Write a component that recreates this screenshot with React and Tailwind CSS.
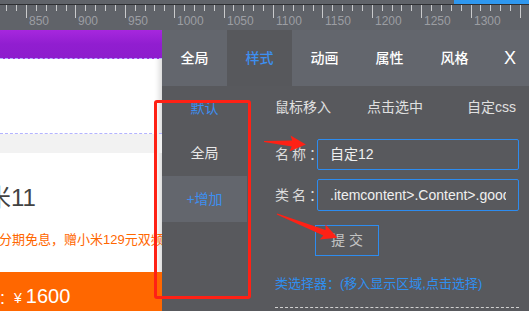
import React from 'react';

const FONT = "font-['Liberation_Sans','Noto_Sans_CJK_SC',sans-serif]";

// ruler along the top: minor tick every ~9.88px, label every 5th tick
const Ruler = () => {
  const ticks = [];
  for (let i = 0; 6.24 + i * 9.88 < 529; i++) {
    const x = Math.round(6.24 + i * 9.88) + 0.5;
    const major = (i - 2) % 5 === 0 && i >= 2;
    ticks.push({ x, major, label: 850 + (i - 2) * 10 });
  }
  return (
    <div className="h-[30px] bg-[#606369] shrink-0">
      <svg width="529" height="30" className="block">
        <rect x="454" y="0" width="75" height="4" fill="#2f98f0" />
        <rect x="0" y="4" width="529" height="1" fill="#2e2f32" />
        {ticks.map((t) => (
          <g key={t.x}>
            <line x1={t.x} x2={t.x} y1="5" y2={t.major ? 18 : 11} stroke="#c9cacc" strokeWidth="1" />
            {t.major && t.x < 500 && (
              <text x={t.x + 2.5} y="25" fontSize="12" fill="#9c9ea3" fontFamily="Liberation Sans, sans-serif">
                {t.label}
              </text>
            )}
          </g>
        ))}
      </svg>
    </div>
  );
};

const LeftPage = () => (
  <div className="w-[162px] shrink-0 flex flex-col bg-white overflow-hidden shadow-[inset_-7px_0_6px_-5px_rgba(0,0,0,0.18)]">
    <div className="h-[29px] bg-linear-to-b from-[#a627de] via-[#911ed0] to-[#8d1dcd] border-b border-dashed border-[#b3b3ff]" />
    <div className="h-[75px] border-b border-dashed border-[#b3b3ff]" />
    <div className="h-[19px] bg-[#f2f2f2]" />
    <div className="h-[119px] whitespace-nowrap">
      <div className="pt-[30px] text-[24px] leading-[30px] text-[#424242] ml-[-37px]">小米11</div>
      <div className="mt-[18px] text-[13px] leading-[18px] text-[#ff6700] ml-[-1px]">分期免息，赠小米129元双频路由器</div>
    </div>
    <div className="h-[39px] bg-[#ff6700] flex items-baseline pt-[12px] text-white whitespace-nowrap">
      <span className="text-[14px] leading-[24px] ml-[-1px]">：</span>
      <span className="text-[14px] leading-[24px] ml-[1px]">¥</span>
      <span className="text-[20px] leading-[24px] ml-[4px]">1600</span>
    </div>
  </div>
);

const tabs = ['全局', '样式', '动画', '属性', '风格'];

const Panel = () => (
  <div className="flex-1 flex flex-col bg-[#58595d] min-w-0">
    <div className="h-[56px] bg-[#63666d] flex">
      {tabs.map((t) => (
        <div
          key={t}
          className={`w-[65px] flex items-center justify-center text-[14px] font-medium ${
            t === '样式' ? 'bg-[#57585c] text-[#3d8ff0]' : 'text-white'
          }`}
        >
          {t}
        </div>
      ))}
      <div className="flex-1 flex items-center justify-center text-[18px] text-white font-light pl-[4px]">X</div>
    </div>
    <div className="flex flex-1">
      <div className="w-[85px] shrink-0 flex flex-col text-[14px]">
        <div className="h-[44px] flex items-center justify-center text-[#3d8ff0]">默认</div>
        <div className="h-[46px] flex items-center justify-center text-[#e8e8e8]">全局</div>
        <div className="h-[46px] flex items-center justify-center text-[#3d8ff0] bg-[#63666d]">+增加</div>
      </div>
      <div className="flex-1 min-w-0 pl-[28px] pr-[10px] flex flex-col text-[14px]">
        <div className="flex pt-[11px] leading-[20px] text-[#e0e0e0] whitespace-nowrap">
          <span>鼠标移入</span>
          <span className="ml-[36px]">点击选中</span>
          <span className="ml-[44px]">自定css</span>
        </div>
        <div className="flex items-center mt-[22px] h-[31px]">
          <span className="w-[42px] shrink-0 whitespace-nowrap tracking-[3px] text-[#dcdcdc]">名称：</span>
          <div className="flex-1 min-w-0 h-full border border-[#2d8cf0] rounded-[2px] pl-[12px] flex items-center text-[#f0f0f0]">
            自定12
          </div>
        </div>
        <div className="flex items-center mt-[9px] h-[32px]">
          <span className="w-[42px] shrink-0 whitespace-nowrap tracking-[3px] text-[#dcdcdc]">类名：</span>
          <div className="flex-1 min-w-0 h-full border border-[#2d8cf0] rounded-[2px] pl-[12px] pr-[12px] flex items-center text-[#f0f0f0]">
            <span className="min-w-0 overflow-hidden whitespace-nowrap">.itemcontent&gt;.Content&gt;.goods</span>
          </div>
        </div>
        <div className="mt-[14px] ml-[40px] w-[64px] h-[31px] border border-[#2d8cf0] flex items-center justify-center text-[#c4c4c4] tracking-[4px] pl-[4px]">
          提交
        </div>
        <div className="mt-[18px] text-[13px] leading-[20px] text-[#2f8ff0] whitespace-nowrap">
          类选择器：(移入显示区域,点击选择)
        </div>
        <div className="mt-[13px] border-t border-dashed border-[#d0d0d0]" />
      </div>
    </div>
  </div>
);

const Arrow = ({ x, y, len, angle }) => (
  <polygon
    transform={`translate(${x} ${y}) rotate(${angle})`}
    points={`0,-0.6 ${len - 14},-3 ${len - 16},-8 ${len},0 ${len - 16},8 ${len - 14},3 0,0.6`}
    fill="#fe2115"
  />
);

export default function App() {
  return (
    <div className={`relative w-[529px] h-[311px] overflow-hidden bg-[#58595d] flex flex-col ${FONT}`}>
      <Ruler />
      <div className="flex h-[281px]">
        <LeftPage />
        <Panel />
      </div>
      <div className="absolute left-[154px] top-[100px] w-[97px] h-[199px] border-[3px] border-[#fe2115] rounded-[3px] pointer-events-none" />
      <svg className="absolute inset-0 pointer-events-none" width="529" height="311">
        <Arrow x={264} y={141.5} len={42} angle={4.2} />
        <Arrow x={277} y={214} len={65} angle={21.5} />
      </svg>
    </div>
  );
}
